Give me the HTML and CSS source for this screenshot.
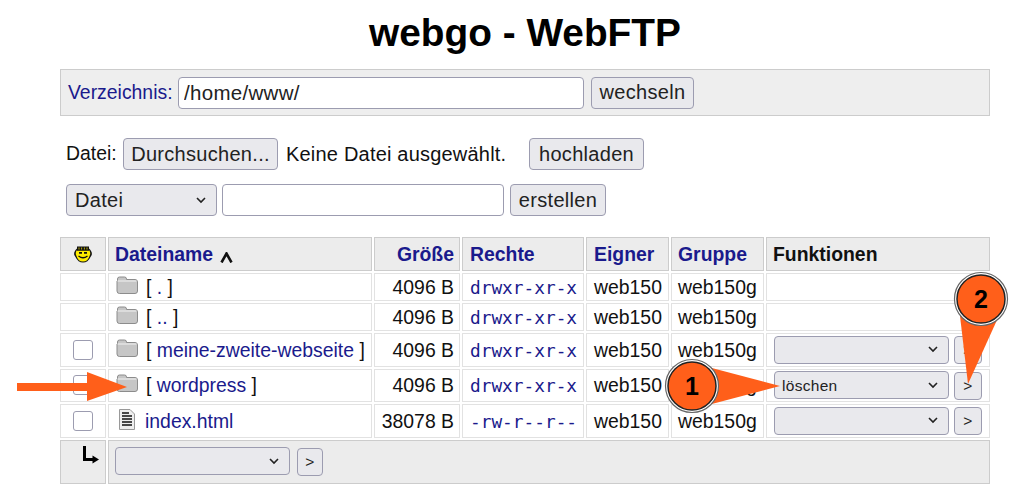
FILE: index.html
```html
<!DOCTYPE html>
<html lang="de">
<head>
<meta charset="utf-8">
<title>webgo - WebFTP</title>
<link rel="stylesheet" href="styles.css">
</head>
<body>
<svg width="0" height="0" class="defs">
  <symbol id="folder" viewBox="0 0 22 18">
    <path d="M1.500 5V3a2 2 0 0 1 2-2h5a2 2 0 0 1 2 2v.5h8.500a2.500 2.500 0 0 1 2.500 2.500v9a2.500 2.500 0 0 1-2.500 2.500H3.500a2.500 2.500 0 0 1-2.500-2.500V5z" fill="#c6c6c6" stroke="#8c8c8c"/>
    <path d="M1.500 5h19" stroke="#f2f2f2" fill="none"/>
  </symbol>
  <symbol id="doc" viewBox="0 0 16 21">
    <path d="M.5.5h10.500l4.500 4.500v15.500H.5z" fill="#eee" stroke="#999"/>
    <path d="M3 4h7M3 7h10M3 10h10M3 13h10M3 16h10" stroke="#111" stroke-width="1.500" fill="none"/>
  </symbol>
</svg>

<h1 class="title">webgo - WebFTP</h1>

<form class="dirbar">
  <a class="link" href="#">Verzeichnis:</a>
  <input class="field dirfield" type="text" value="/home/www/">
  <button class="btn" type="button">wechseln</button>
</form>

<div class="upload">
  <span class="upload-label">Datei:</span>
  <button class="btn browse" type="button">Durchsuchen...</button>
  <span class="nofile">Keine Datei ausgewählt.</span>
  <button class="btn upload-btn" type="button">hochladen</button>
</div>

<div class="create">
  <select class="sel sel-type"><option>Datei</option></select>
  <input class="field namefield" type="text">
  <button class="btn" type="button">erstellen</button>
</div>

<table class="files">
  <colgroup>
    <col class="c1"><col class="c2"><col class="c3"><col class="c4"><col class="c5"><col class="c6"><col class="c7">
  </colgroup>
  <thead>
    <tr class="r-head">
      <th class="center">
        <svg class="smiley" width="20" height="18" viewBox="0 0 20 18">
          <path d="M4 3.500V1.500h12v2q1.500 1 2 2.500 2 3-.5 6-2.500 5.500-7.500 5.500T2.500 12Q0 9 2 6q.500-1.500 2-2.500z" fill="#111"/>
          <path d="M3.500 5.500h13q1.500 3 0 5.500-1.500 5.500-6.500 5.500T3.500 11q-1.500-2.500 0-5.500z" fill="#ffee00"/>
          <path d="M4 3h12v2.500H4z" fill="#111"/>
          <path d="M6 2.500v2M8.600 2.500v2M11.400 2.500v2M14 2.500v2" stroke="#ffee00" stroke-width=".7"/>
          <path d="M6 7h3v1.800H6zM11 7h3v1.800h-3z" fill="#111"/>
          <path d="M5.500 11q4.500 3.500 9 0" stroke="#111" stroke-width="1.300" fill="none"/>
        </svg>
      </th>
      <th><a class="link" href="#">Dateiname</a> <svg class="caret" width="13" height="11" viewBox="0 0 13 11"><path d="M1.500 10.500 6.500 1.500l5 9" stroke="#111" stroke-width="2.600" fill="none"/></svg></th>
      <th class="right"><a class="link" href="#">Größe</a></th>
      <th class="perm"><a class="link" href="#">Rechte</a></th>
      <th class="owner"><a class="link" href="#">Eigner</a></th>
      <th><a class="link" href="#">Gruppe</a></th>
      <th>Funktionen</th>
    </tr>
  </thead>
  <tbody>
    <tr class="r-small">
      <td></td>
      <td class="name"><svg class="ico-folder"><use href="#folder"/></svg><span>[ <a class="link" href="#">.</a> ]</span></td>
      <td class="right">4096 B</td><td class="perm"><a class="link mono" href="#">drwxr-xr-x</a></td><td class="owner">web150</td><td>web150g</td><td></td>
    </tr>
    <tr class="r-small">
      <td></td>
      <td class="name"><svg class="ico-folder"><use href="#folder"/></svg><span>[ <a class="link" href="#">..</a> ]</span></td>
      <td class="right">4096 B</td><td class="perm"><a class="link mono" href="#">drwxr-xr-x</a></td><td class="owner">web150</td><td>web150g</td><td></td>
    </tr>
    <tr class="r-big">
      <td class="center"><input class="check" type="checkbox"></td>
      <td class="name"><svg class="ico-folder"><use href="#folder"/></svg><span>[ <a class="link" href="#">meine-zweite-webseite</a> ]</span></td>
      <td class="right">4096 B</td><td class="perm"><a class="link mono" href="#">drwxr-xr-x</a></td><td class="owner">web150</td><td>web150g</td>
      <td class="actions"><select class="sel sel-row"><option></option></select><button class="btn mini" type="button">&gt;</button></td>
    </tr>
    <tr class="r-big">
      <td class="center"><input class="check" type="checkbox"></td>
      <td class="name"><svg class="ico-folder"><use href="#folder"/></svg><span>[ <a class="link" href="#">wordpress</a> ]</span></td>
      <td class="right">4096 B</td><td class="perm"><a class="link mono" href="#">drwxr-xr-x</a></td><td class="owner">web150</td><td>web150g</td>
      <td class="actions"><select class="sel sel-row"><option>löschen</option></select><button class="btn mini" type="button">&gt;</button></td>
    </tr>
    <tr class="r-big">
      <td class="center"><input class="check" type="checkbox"></td>
      <td class="name file"><svg class="ico-doc"><use href="#doc"/></svg><a class="link" href="#">index.html</a></td>
      <td class="right">38078 B</td><td class="perm"><a class="link mono" href="#">-rw-r--r--</a></td><td class="owner">web150</td><td>web150g</td>
      <td class="actions"><select class="sel sel-row"><option></option></select><button class="btn mini" type="button">&gt;</button></td>
    </tr>
  </tbody>
  <tfoot>
    <tr class="r-foot">
      <td class="corner">
        <svg class="corner-ico" width="18" height="19" viewBox="0 0 18 19"><path d="M2.500 0v13.500H12" stroke="#000" stroke-width="3" fill="none"/><path d="M10.500 9.500 17 13.500l-6.500 4z" fill="#000"/></svg>
      </td>
      <td colspan="6" class="actions foot-actions"><select class="sel sel-row"><option></option></select><button class="btn mini foot-mini" type="button">&gt;</button></td>
    </tr>
  </tfoot>
</table>

<svg class="overlay" width="1024" height="497" viewBox="0 0 1024 497" aria-hidden="true">
  <path d="M17 383h70v-11l40 15-40 14v-10H17z" fill="#ff5f1a"/>
  <path d="M708 367 780 386 708 405z" fill="#ff5f1a"/>
  <circle cx="692" cy="386" r="26.500" fill="#fff" stroke="#666" stroke-width="1.200"/>
  <circle cx="692" cy="386" r="24" fill="#ff5f1a" stroke="#222" stroke-width="1.500"/>
  <path d="M960 316 968 384 997 320z" fill="#ff5f1a"/>
  <circle cx="981" cy="299" r="26.500" fill="#fff" stroke="#666" stroke-width="1.200"/>
  <circle cx="981" cy="299" r="24" fill="#ff5f1a" stroke="#222" stroke-width="1.500"/>
  <text class="num" x="692" y="395">1</text>
  <text class="num" x="981" y="308">2</text>
</svg>
</body>
</html>
```
FILE: styles.css
```css
* { box-sizing: border-box; }
html, body { margin: 0; padding: 0; }
body {
  position: relative;
  width: 1024px;
  height: 497px;
  overflow: hidden;
  background: #fff;
  color: #111;
  font: 19.400px/1.2 "Liberation Sans", Arial, sans-serif;
  padding: 0 34px 0 60px;
}
.defs { position: absolute; }
.title {
  margin: 0;
  height: 69px;
  padding: 11px 0 0 0;
  font-size: 38.800px;
  line-height: 44px;
  font-weight: 700;
  text-align: center;
  color: #000;
}
.link { color: #1a1a8c; text-decoration: none; }

.field, .btn, .sel {
  font: 20px "Liberation Sans", Arial, sans-serif;
  letter-spacing: .3px;
  color: #222;
  border: 1.500px solid #9c9cb0;
  border-radius: 4px;
  margin: 0;
  height: 32px;
}
.field { background: #fff; padding: 0 5px; outline: none; }
.btn {
  background: #e9e9ed;
  padding: 0;
  cursor: default;
}
.sel {
  appearance: none;
  -webkit-appearance: none;
  background: #e9e9ed url("data:image/svg+xml,%3Csvg xmlns='http://www.w3.org/2000/svg' width='10' height='7'%3E%3Cpath d='M1 1l4 4 4-4' fill='none' stroke='%23222' stroke-width='1.600'/%3E%3C/svg%3E") no-repeat right 10px center;
  padding: 0 20px 0 8px;
}

.dirbar {
  display: flex;
  align-items: center;
  height: 47px;
  padding: 0 7px;
  background: #eee;
  border: 1px solid #ccc;
}
.dirbar .link { width: 110px; }
.dirfield { width: 406px; font-size: 20.500px; }
.dirbar .btn { margin-left: 7px; width: 103px; }

.upload {
  display: flex;
  align-items: center;
  height: 32px;
  margin-top: 22px;
  padding-left: 6px;
}
.upload-label { width: 51px; }
.browse { width: 155px; margin-left: 6px; }
.nofile { width: 243px; margin-left: 8px; font-size: 20px; letter-spacing: .2px; }
.upload-btn { width: 115px; }

.create {
  display: flex;
  align-items: center;
  gap: 5px;
  margin-top: 14px;
  padding-left: 6px;
}
.sel-type { width: 151px; }
.namefield { width: 282px; }
.create .btn { width: 96px; margin-left: 1px; }

.files {
  margin: 19px 0 0 -2px;
  width: 934px;
  table-layout: fixed;
  border-collapse: separate;
  border-spacing: 2px;
}
.c1 { width: 46px; }
.c2 { width: 264px; }
.c3 { width: 86px; }
.c4 { width: 122px; }
.c5 { width: 83px; }
.c6 { width: 93px; }
.c7 { width: 224px; }
th, td {
  padding: 1px 6px 0;
  text-align: left;
  vertical-align: middle;
  white-space: nowrap;
  border: 1px solid #e2e2e2;
  background: #fff;
}
th {
  padding-top: 2px;
  background: #ececec;
  border-color: #ccc;
  font-size: 19.400px;
  font-weight: 700;
  color: #111;
}
.r-head { height: 34px; }
.r-small { height: 28px; }
.r-big { height: 33.500px; }
.r-foot { height: 44px; }
tfoot td { background: #ececec; border-color: #ccc; }
.center { text-align: center; padding: 0; }
.right { text-align: right; padding-right: 5px; }
.perm { padding-left: 7px; }
.owner { padding-left: 7px; }
.corner { vertical-align: top; padding: 5px 0 0 21px; }
.corner-ico { display: block; }
.mono { font: 17.800px "DejaVu Sans Mono", monospace; }
.name { padding-left: 7px; }
.name span { margin-left: 8px; }
.ico-folder { width: 22px; height: 18px; vertical-align: 0; }
.ico-doc { width: 16px; height: 21px; margin: 0 10px 0 3px; vertical-align: -2px; }
.caret { margin-left: 2px; vertical-align: -2px; }
.smiley { display: block; margin: 0 auto; }
.check {
  appearance: none;
  -webkit-appearance: none;
  display: block;
  margin: 0 auto;
  width: 20px;
  height: 20px;
  background: #fff;
  border: 1.500px solid #9c9cb0;
  border-radius: 3px;
}
.actions { padding: 0 0 0 7px; font-size: 0; }
.sel-row { width: 175px; height: 28px; font-size: 15.500px; padding-left: 7px; }
.mini { width: 28px; height: 28px; margin-left: 5px; font-size: 15.500px; }
.foot-actions { padding-left: 6px; }
.foot-actions .foot-mini { width: 26px; margin-left: 7px; }

.overlay { position: absolute; left: 0; top: 0; pointer-events: none; }
.num { font: 700 25px "Liberation Sans", Arial, sans-serif; fill: #000; text-anchor: middle; }
```
